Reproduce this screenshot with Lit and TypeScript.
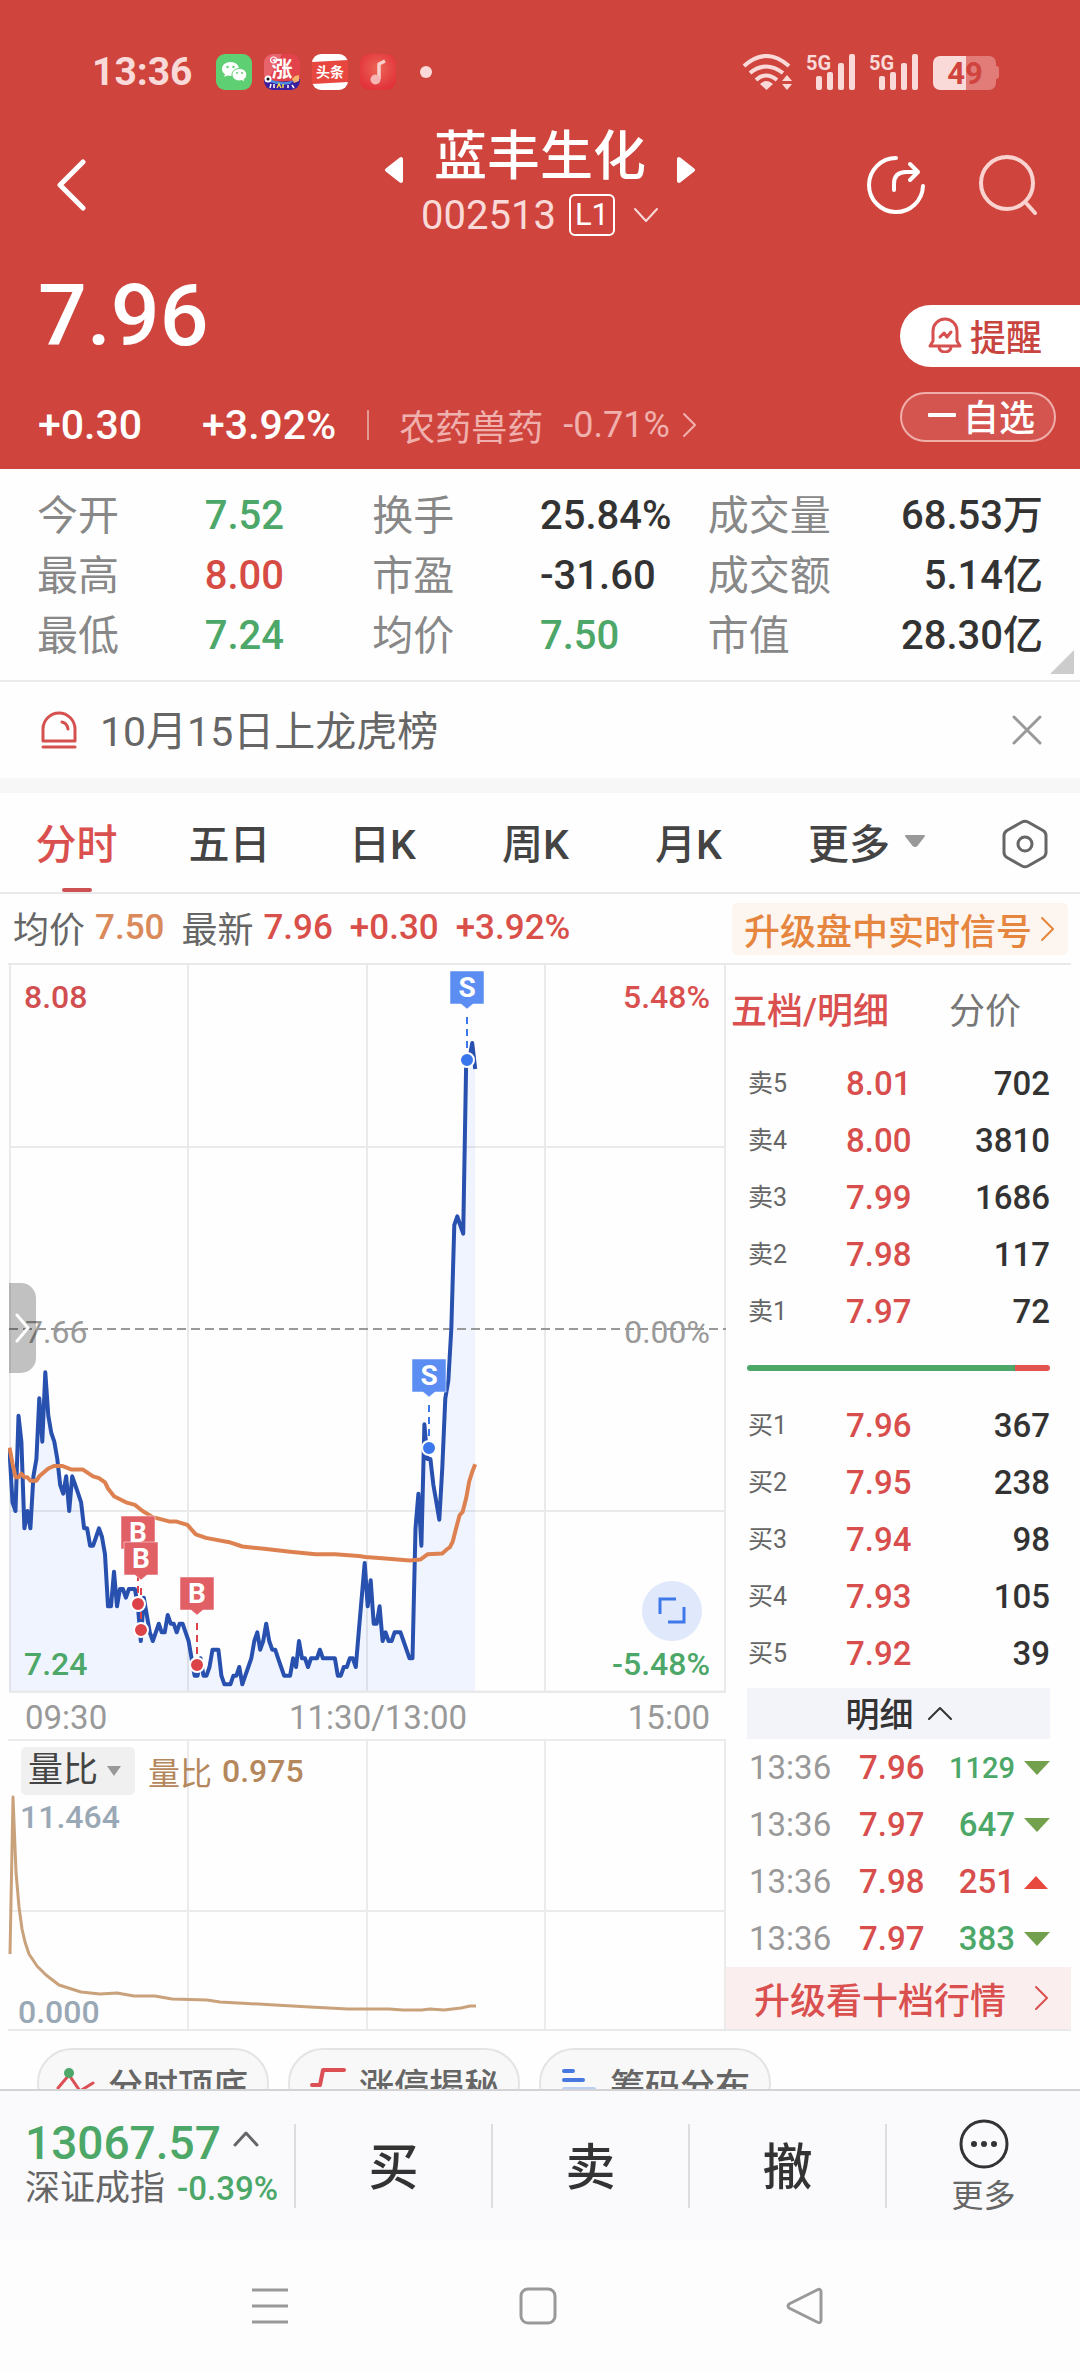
import { LitElement, html, svg, css } from "lit";
import { customElement } from "lit/decorators.js";

/* Minute prices in cents, 09:30 onwards. */
const PRICES = [
  752, 746, 745, 756, 753, 743, 745, 743, 749, 751, 758, 753, 761, 756, 754, 753, 751, 748, 747, 749,
  745, 749, 748, 747, 746, 743, 743, 741, 741, 742, 743, 742, 740, 734, 734, 738, 734, 736, 736, 735,
  736, 736, 736, 734, 730, 735, 733, 731, 730, 731, 732, 731, 731, 733, 732, 732, 731, 732, 732, 731,
  730, 728, 726, 726, 728, 726, 726, 727, 729, 729, 729, 726, 725, 725, 725, 726, 726, 727, 725, 726,
  727, 728, 730, 731, 729, 730, 732, 730, 729, 729, 728, 727, 726, 726, 726, 728, 727, 730, 728, 728,
  727, 728, 728, 728, 729, 728, 728, 728, 728, 728, 726, 726, 727, 727, 728, 728, 727, 731, 735, 739,
  734, 737, 732, 732, 734, 730, 731, 730, 730, 731, 731, 731, 730, 729, 728, 728, 743, 747, 741, 755,
  751, 751, 748, 746, 744, 750, 758, 760, 766, 778, 779, 778, 777, 797, 797, 799, 796,
];

/* Average price: [minute, cents]. */
const AVERAGE: [number, number][] = [
  [0, 752.3], [1, 750.5], [2, 748.9], [3, 748.9], [4, 749.3], [5, 748.9], [6, 748.9], [7, 748.5], [9, 748.5],
  [10, 749], [13, 749.9], [15, 750.2], [17.6, 750.2], [20.6, 749.8], [24.5, 749.8], [28, 749], [30, 748.8],
  [32, 748.3], [33, 747.6], [35, 746.7], [39, 746], [42, 745.7], [44.6, 745], [48, 744.3], [53.5, 743.8],
  [55.7, 743.8], [59.6, 743.4], [62.4, 742.3], [65.8, 741.9], [73.6, 741.4], [78, 740.9], [86, 740.6],
  [94, 740.3], [102.5, 740], [109, 740], [117, 739.8], [119.3, 739.7], [127, 739.5], [134, 739.3], [137.7, 739.4],
  [140, 740], [145, 740.1], [146.6, 740.6], [147.5, 740.8], [148.5, 741.5], [149.6, 743], [150.8, 744.5],
  [151.8, 744.9], [153, 746.5], [154, 748.4], [155, 749.5], [156, 750.4],
];

/* Volume ratio curve in the units of its own plot. */
const RATIO =
  "2,213 5,56 8,131 11,166 14,188 17,201 21,213 29,225 38,234 51,244 73,251 92,253 109,252 126,255 147,255 164,258 199,259 212,261 230,262 267,264 302,266 340,268 381,268 395,269 414,269 422,268 436,269 453,267 462,265 468,265";

const W = 718;
const H = 728;
const px = (minute: number) => 1.5 + minute * 2.985;
const py = (cents: number) => ((808 - cents) * H) / 84;
const at = (m: number, c: number) => `${px(m).toFixed(1)},${py(c).toFixed(1)}`;

interface Mark { kind: "B" | "S"; x: number; top: number; dot: number }
const MARKS: Mark[] = [
  { kind: "B", x: 130, top: 551, dot: 639 },
  { kind: "B", x: 133, top: 577, dot: 665 },
  { kind: "B", x: 189, top: 612, dot: 700 },
  { kind: "S", x: 421, top: 394, dot: 483 },
  { kind: "S", x: 459, top: 6, dot: 95 },
];

const STATS: [string, string, string][] = [
  ["今开", "7.52", "down"], ["换手", "25.84%", ""], ["成交量", "68.53万", ""],
  ["最高", "8.00", "up"], ["市盈", "-31.60", ""], ["成交额", "5.14亿", ""],
  ["最低", "7.24", "down"], ["均价", "7.50", "down"], ["市值", "28.30亿", ""],
];
const SELLS = [["卖5", "8.01", "702"], ["卖4", "8.00", "3810"], ["卖3", "7.99", "1686"], ["卖2", "7.98", "117"], ["卖1", "7.97", "72"]];
const BUYS = [["买1", "7.96", "367"], ["买2", "7.95", "238"], ["买3", "7.94", "98"], ["买4", "7.93", "105"], ["买5", "7.92", "39"]];
const TICKS: [string, string, string, "up" | "down"][] = [
  ["13:36", "7.96", "1129", "down"], ["13:36", "7.97", "647", "down"],
  ["13:36", "7.98", "251", "up"], ["13:36", "7.97", "383", "down"],
];

const base = css`
  :host { display: block; }
  * { box-sizing: border-box; }
  svg { display: block; flex: none; }
  button, select {
    font: inherit; color: inherit; background: none; border: 0; padding: 0; margin: 0;
    white-space: nowrap; cursor: pointer;
  }
  a { color: inherit; text-decoration: none; white-space: nowrap; }
  .up { color: #d84e4c; }
  .down { color: #4ca768; }
`;

const chevron = (w: number, h: number, d: string, sw = 3) =>
  html`<svg width=${w} height=${h} viewBox="0 0 ${w} ${h}" fill="none" stroke="currentColor" stroke-width=${sw} stroke-linecap="round" stroke-linejoin="round" aria-hidden="true"><path d=${d} /></svg>`;

@customElement("status-bar")
class StatusBar extends LitElement {
  static styles = [base, css`
    .bar { display: flex; align-items: center; padding: 54px 80px 0 92px; color: #f9dad8; }
    .time { font-size: 39px; font-weight: 700; line-height: 36px; }
    .apps { display: flex; align-items: center; gap: 12px; margin-left: 23px; flex: 1; }
    .more { width: 12px; height: 12px; border-radius: 50%; background: #f9dad8; margin-left: 12px; }
    .system { display: flex; align-items: center; gap: 14px; }
    .tiny { font-weight: 700; }
  `];

  private signal() {
    return html`<svg width="49" height="36" viewBox="0 0 49 36" fill="currentColor">
      <text class="tiny" x="-1" y="16" font-size="20">5G</text>
      <rect x="9" y="22" width="6" height="14" rx="2" /><rect x="20" y="18" width="6" height="18" rx="2" />
      <rect x="31" y="9" width="6" height="27" rx="2" /><rect x="42" y="0" width="6" height="36" rx="2" />
    </svg>`;
  }

  render() {
    return html`<div class="bar">
      <span class="time">13:36</span>
      <div class="apps">
        <svg width="36" height="36" viewBox="0 0 36 36">
          <rect width="36" height="36" rx="9" fill="#5fcf73" />
          <path d="M14.500 8C9.500 8 6 11.200 6 15c0 2.200 1.200 4 3 5.300L8.200 23l3.200-1.600c1 .3 2 .5 3.100.5C19.500 21.900 23 18.800 23 15s-3.500-7-8.500-7z" fill="#fff" />
          <path d="M23.500 14.500c-4.200 0-7.500 2.700-7.500 6.200 0 3.400 3.300 6.200 7.500 6.200.8 0 1.600-.1 2.300-.3l3 1.500-.7-2.600c1.600-1.200 2.600-2.900 2.600-4.800 0-3.500-3-6.200-7.200-6.200z" fill="#fff" stroke="#5fcf73" />
          <g fill="#5fcf73"><circle cx="11.500" cy="13" r="1.200" /><circle cx="17.500" cy="13" r="1.200" /><circle cx="21" cy="19" r="1" /><circle cx="26" cy="19" r="1" /></g>
        </svg>
        <svg width="36" height="36" viewBox="0 0 36 36">
          <clipPath id="r"><rect width="36" height="36" rx="9" /></clipPath>
          <g clip-path="url(#r)">
            <rect width="36" height="36" fill="#e2434b" />
            <path d="M0 0h18L6 22H0z" fill="#e8646c" />
            <path d="M0 25q18 5 36 0v11H0z" fill="#3b1f9c" />
            <path d="M5 25q14 6 25 1l-4 4q-10 2-20-2z" fill="#4c8fe0" />
            <path d="M28 25l3-3 4-1v6l-5 2z" fill="#f6b26b" />
            <circle cx="4" cy="25" r="3.500" fill="#fff" /><circle cx="4" cy="25" r="1.500" fill="#111" />
            <circle cx="9.500" cy="6" r="3" fill="none" stroke="#fff" stroke-width="1.200" />
            <text class="tiny" x="18" y="22" font-size="21" fill="#fff" text-anchor="middle">涨</text>
            <path d="M6 34l1-4M10 34v-4M24 31v3M28 31l2 3" stroke="#fff" stroke-width="1.500" /><path d="M13 34l2-4 2 4M19 30v4" stroke="#f5d84a" stroke-width="1.500" fill="none" />
          </g>
        </svg>
        <svg width="36" height="36" viewBox="0 0 36 36">
          <rect width="36" height="36" rx="9" fill="#fff" />
          <path d="M0 8l36-2v22L0 30z" fill="#e8473f" />
          <text class="tiny" x="18" y="23" font-size="14" fill="#fff" text-anchor="middle">头条</text>
        </svg>
        <svg width="36" height="36" viewBox="0 0 36 36">
          <defs><radialGradient id="m" cx=".5" cy=".4" r=".6"><stop offset="0" stop-color="#ec6555" /><stop offset="1" stop-color="#e2333b" /></radialGradient></defs>
          <rect width="36" height="36" rx="9" fill="url(#m)" />
          <path d="M19 25V10l6-3" fill="none" stroke="#f8cfca" stroke-width="3.500" stroke-linejoin="round" />
          <circle cx="15.500" cy="25.500" r="5" fill="#f5b5b3" />
        </svg>
        <span class="more"></span>
      </div>
      <div class="system">
        <svg width="51" height="36" viewBox="0 0 51 36" fill="none" stroke="currentColor" stroke-width="4">
          <path d="M2 12Q24-8 47 12M8 19Q24 6 41 19M14 26Q24 17 35 26" />
          <path d="M18 30q6.500-6 13 0l-6.500 6z" fill="currentColor" stroke="none" />
          <path d="M40 27h10l-5-6zM40 30h10l-5 6z" fill="currentColor" stroke="none" />
        </svg>
        ${this.signal()}${this.signal()}
        <svg width="67" height="36" viewBox="0 0 67 36">
          <path d="M33 2h23a7 7 0 0 1 7 7v3q3 0 3 3v7q0 3-3 3v4a7 7 0 0 1-7 7H33z" fill="#e17c78" />
          <path d="M33 2H7a7 7 0 0 0-7 7v20a7 7 0 0 0 7 7h26z" fill="#f9dad8" />
          <text class="tiny" x="32" y="30" font-size="31" fill="#cf453e" text-anchor="middle">49</text>
        </svg>
      </div>
    </div>`;
  }
}

@customElement("stock-header")
class StockHeader extends LitElement {
  static styles = [base, css`
    .head { display: grid; grid-template-columns: 1fr auto 1fr; align-items: center; padding: 37px 42px 0; color: #fff; }
    .back { justify-self: start; padding-left: 14px; }
    .center { display: flex; flex-direction: column; align-items: center; }
    .names { display: flex; align-items: center; gap: 30px; }
    .name { margin: 0; font-size: 53px; font-weight: 500; line-height: 60px; }
    .step { margin-top: 26px; display: flex; }
    .code { display: flex; align-items: center; height: 56px; font-size: 40px; color: #f9dad8; }
    .level { border: 2px solid #fff; border-radius: 6px; color: #fff; font-size: 31px; line-height: 38px; width: 46px; text-align: center; margin: 0 18px 0 13px; }
    .actions { display: flex; justify-content: flex-end; gap: 52px; }
    .quote { display: flex; justify-content: space-between; padding: 33px 0 20px 38px; color: #fff; }
    .price { font-size: 86px; font-weight: 500; line-height: 80px; }
    .change { display: flex; align-items: center; margin-top: 45px; height: 48px; font-size: 41px; font-weight: 500; }
    .percent { margin-left: 60px; }
    .rule { width: 2px; height: 30px; background: #e29a95; margin: 0 30px 0 31px; }
    .sector { display: flex; align-items: center; font-size: 36px; font-weight: 400; color: #f0b0ad; }
    .sector-change { margin: 0 12px 0 20px; }
    .side { display: flex; flex-direction: column; gap: 25px; padding-top: 29px; }
    .remind { display: flex; align-items: center; gap: 8px; width: 180px; height: 62px; padding: 0 0 2px 28px; border-radius: 31px 0 0 31px; background: #fff; color: #c8443f; font-size: 36px; font-weight: 500; }
    .fav { display: flex; align-items: center; gap: 7px; width: 156px; height: 50px; padding: 0 0 4px 26px; border: 2px solid #f0aeab; border-radius: 25px; background: #d4554f; font-size: 36px; font-weight: 500; }
  `];

  render() {
    return html`
      <header class="head">
        <button class="back" aria-label="返回">${chevron(30, 52, "M27 3L4 26L27 49", 5)}</button>
        <div class="center">
          <div class="names">
            <button class="step" aria-label="上一只"><svg width="20" height="28" viewBox="0 0 20 28"><path d="M17 3v22L3 14z" fill="#fff" stroke="#fff" stroke-width="4" stroke-linejoin="round" /></svg></button>
            <h1 class="name">蓝丰生化</h1>
            <button class="step" aria-label="下一只"><svg width="20" height="28" viewBox="0 0 20 28"><path d="M3 3v22l14-11z" fill="#fff" stroke="#fff" stroke-width="4" stroke-linejoin="round" /></svg></button>
          </div>
          <div class="code"><span>002513</span><span class="level">L1</span>${chevron(26, 16, "M2 2L13 14L24 2", 2)}</div>
        </div>
        <div class="actions">
          <button aria-label="分享"><svg width="60" height="60" viewBox="0 0 60 60" fill="none" stroke="#fff" stroke-width="4" stroke-linecap="round" stroke-linejoin="round"><path d="M30 3A27 27 0 1 0 57 31" /><path d="M28 35v-6q0-12 12-12h12M44 9l8 8-8 8" /></svg></button>
          <button aria-label="搜索"><svg width="60" height="60" viewBox="0 0 60 60" fill="none" stroke="#fad3d1" stroke-width="4" stroke-linecap="round"><circle cx="29" cy="28" r="26" /><path d="M49 49l8 9" /></svg></button>
        </div>
      </header>
      <section class="quote">
        <div class="main">
          <div class="price">7.96</div>
          <div class="change">
            <span>+0.30</span><span class="percent">+3.92%</span><span class="rule"></span>
            <a class="sector" href="#sector"><span>农药兽药</span><span class="sector-change">-0.71%</span>${chevron(15, 26, "M2 2L13 13L2 24", 2)}</a>
          </div>
        </div>
        <div class="side">
          <button class="remind">
            <svg width="34" height="36" viewBox="0 0 34 36" fill="none" stroke="#d6504f" stroke-width="3" stroke-linejoin="round" stroke-linecap="round"><path d="M2 29L5 24V14a12 12 0 0 1 24 0v10l3 5z" /><path d="M11 30a6 5 0 0 0 12 0" /><path d="M12 20l4-4 3 4 4-5" /></svg>
            提醒
          </button>
          <button class="fav"><svg width="28" height="4" viewBox="0 0 28 4"><rect width="28" height="4" rx="1" fill="#fff" /></svg>自选</button>
        </div>
      </section>`;
  }
}

@customElement("stock-stats")
class StockStats extends LitElement {
  static styles = [base, css`
    .stats { position: relative; display: grid; grid-template-columns: repeat(3, minmax(0, 1fr)); margin: 0; padding: 17px 37px 14px; border-bottom: 2px solid #ececec; line-height: 60px; }
    .pair { display: grid; grid-template-columns: 1fr 1fr; white-space: nowrap; }
    .label { font-size: 41px; color: #888; }
    .value { margin: 0; font-size: 40px; font-weight: 500; color: #333; }
    .value.up { color: #d64b44; }
    .value.down { color: #4ca768; }
    .pair:nth-child(3n) .value { text-align: right; }
    .corner { position: absolute; right: 6px; bottom: 6px; }
    .notice { display: flex; align-items: center; height: 96px; padding: 0 38px 0 40px; color: #666; font-size: 41px; }
    .text { flex: 1; margin-left: 22px; padding-bottom: 4px; }
    .band { height: 15px; background: #f7f7f7; }
    .close { color: #999; }
  `];

  render() {
    return html`
      <dl class="stats">
        ${STATS.map(([k, v, c]) => html`<div class="pair"><dt class="label">${k}</dt><dd class="value ${c}">${v}</dd></div>`)}
        <svg class="corner" width="24" height="24" viewBox="0 0 24 24"><path d="M24 0v24H0z" fill="#ccc" /></svg>
      </dl>
      <div class="notice">
        <svg width="38" height="38" viewBox="0 0 38 38" fill="none" stroke="#d4514f" stroke-width="3" stroke-linecap="round" stroke-linejoin="round"><path d="M3 30V18a16 16 0 0 1 32 0v12zM3 36h32M22 11q5 1 6 7" /></svg>
        <span class="text">10月15日上龙虎榜</span>
        <button class="close" aria-label="关闭">${chevron(30, 30, "M2 2L28 28M28 2L2 28", 3)}</button>
      </div>
      <div class="band"></div>`;
  }
}

@customElement("chart-tabs")
class ChartTabs extends LitElement {
  static styles = [base, css`
    .tabs { display: grid; grid-template-columns: repeat(5, 153fr) 204fr 111fr; height: 101px; border-bottom: 2px solid #e9e9e9; font-size: 41px; font-weight: 500; color: #444; }
    .tab { position: relative; display: flex; align-items: center; justify-content: center; gap: 14px; padding-bottom: 4px; }
    .active { color: #d9504f; }
    .active::after { content: ""; position: absolute; bottom: 0; width: 30px; height: 4px; border-radius: 2px; background: #cd5152; }
    .gear { padding: 2px 0 0; }
    .info { display: flex; align-items: center; height: 69px; padding: 0 12px 0 13px; font-size: 36px; white-space: nowrap; }
    .key { color: #666; margin-right: 10px; padding-bottom: 4px; }
    .num { font-size: 35px; font-weight: 500; margin-right: 17px; padding-bottom: 2px; }
    .avg { color: #d9895a; }
    .info .up { color: #d94f49; }
    .promo { display: flex; align-items: center; gap: 9px; height: 52px; margin-left: auto; padding: 0 13px 0 12px; border-radius: 5px; background: #fdf5ef; color: #e5853e; font-weight: 500; }
  `];

  render() {
    return html`
      <nav class="tabs">
        <button class="tab active">分时</button>
        ${["五日", "日K", "周K", "月K"].map((t) => html`<button class="tab">${t}</button>`)}
        <button class="tab">更多<svg width="22" height="14" viewBox="0 0 22 14"><path d="M2 2h18l-7 9q-2 2-4 0z" fill="#999" stroke="#999" stroke-width="2" stroke-linejoin="round" /></svg></button>
        <button class="tab gear" aria-label="设置"><svg width="46" height="50" viewBox="0 0 46 50" fill="none" stroke="#666" stroke-width="3"><path d="M20 3q3-1.500 6 0l15 8.500q3 2 3 5v17q0 3-3 5L26 47q-3 1.500-6 0L5 38.500q-3-2-3-5v-17q0-3 3-5z" /><circle cx="23" cy="25" r="7" /></svg></button>
      </nav>
      <div class="info">
        <span class="key">均价</span><span class="num avg">7.50</span>
        <span class="key">最新</span><span class="num up">7.96</span><span class="num up">+0.30</span><span class="num up">+3.92%</span>
        <a class="promo" href="#signal"><span>升级盘中实时信号</span>${chevron(14, 26, "M1 2L12 13L1 24", 2)}</a>
      </div>`;
  }
}

@customElement("price-chart")
class PriceChart extends LitElement {
  static styles = [base, css`
    .plot { position: relative; }
    .canvas { width: 100%; height: auto; }
    .axis { display: flex; justify-content: space-between; align-items: center; height: 48px; padding: 2px 16px 0 17px; font-size: 33px; color: #999; border-bottom: 2px solid #ececec; }
    .noon { padding-left: 21px; }
    .lbl { font-size: 32px; font-weight: 500; }
    .plain { font-size: 32px; }
    .flag { font-size: 28px; font-weight: 700; }
    .handle { position: absolute; left: 1px; top: 50%; height: 90px; margin-top: -46px; width: 27px; padding-left: 6px; border-radius: 0 15px 15px 0; background: rgba(0, 0, 0, 0.24); color: #fff; }
    .expand { position: absolute; right: 24px; bottom: 52px; width: 60px; height: 60px; border-radius: 50%; background: #e0e8fc; display: grid; place-items: center; }
    .legend { position: absolute; left: 13px; top: 6px; display: flex; align-items: center; gap: 13px; color: #b5875c; font-size: 32px; }
    .pick { position: relative; display: flex; align-items: center; }
    .select { appearance: none; width: 114px; height: 48px; padding-left: 7px; border-radius: 5px; background: #f0f0f0; color: #444; font-size: 35px; line-height: 46px; }
    .caret { position: absolute; right: 13px; pointer-events: none; }
    .ratio { display: flex; align-items: center; gap: 10px; }
    .ratio-num { font-weight: 500; }
  `];

  private mark(m: Mark) {
    const red = m.kind === "B";
    const fill = red ? "#e06066" : "#5b8df2";
    const dot = red ? "#dc4349" : "#3a76ec";
    return svg`
      <path d="M${m.x} ${m.top + 46}V${m.dot}" stroke=${dot} stroke-width="2" stroke-dasharray="7 5" />
      <circle cx=${m.x} cy=${m.dot} r="7" fill=${dot} stroke="#fff" stroke-width="2" />
      <path d="M${m.x - 17} ${m.top}h34v33h-11l-6 5-6-5h-11z" fill=${fill} stroke="#fff" stroke-opacity=".5" />
      <text class="flag" x=${m.x} y=${m.top + 26} text-anchor="middle" fill="#fff">${m.kind}</text>`;
  }

  render() {
    const line = PRICES.map((c, i) => at(i, c)).join(" ");
    const last = px(PRICES.length - 1);
    const avg = AVERAGE.map(([m, c]) => at(m, c)).join(" ");
    return html`
      <div class="plot">
        <svg class="canvas" viewBox="0 0 ${W} ${H}" role="img" aria-label="分时走势">
          <rect x="1" width="716" height=${H} fill="#fefefe" />
          <polygon points="${px(0)},${H} ${line} ${last},${H}" fill="#eff4fe" />
          <path d="M2 0V728M180 0V728M359 0V728M537 0V728M717 0V728M1 182H718M1 546H718" stroke="#000" stroke-opacity=".08" stroke-width="2" fill="none" />
          <path d="M1 727H718" stroke="#e9e9ea" stroke-width="3" />
          <path d="M1 364H718" stroke="#999" stroke-width="2" stroke-dasharray="9 5" />
          <text class="lbl" x="16" y="43" fill="#d14f50">8.08</text>
          <text class="lbl" x="702" y="43" fill="#d9504f" text-anchor="end">5.48%</text>
          <text class="plain" x="17" y="378" fill="#999">7.66</text>
          <text class="plain" x="702" y="378" fill="#999" text-anchor="end">0.00%</text>
          <text class="lbl" x="16" y="710" fill="#4ca768">7.24</text>
          <text class="lbl" x="702" y="710" fill="#4ca768" text-anchor="end">-5.48%</text>
          <polyline points=${line} fill="none" stroke="#2850ae" stroke-width="4" stroke-linejoin="round" />
          <polyline points=${avg} fill="none" stroke="#dd8150" stroke-width="4" stroke-linejoin="round" />
          ${MARKS.map((m) => this.mark(m))}
        </svg>
        <button class="handle" aria-label="展开侧栏">${chevron(16, 30, "M2 2L13 15L2 28", 3)}</button>
        <button class="expand" aria-label="全屏"><svg width="30" height="28" viewBox="0 0 30 28" fill="none" stroke="#3f78e8" stroke-width="3"><path d="M3 17V2h16M27 10v15H11" /></svg></button>
      </div>
      <div class="axis"><span>09:30</span><span class="noon">11:30/13:00</span><span>15:00</span></div>
      <div class="plot">
        <svg class="canvas" viewBox="0 0 718 288" role="img" aria-label="量比走势">
          <path d="M180 0V288M359 0V288M537 0V288M717 0V288M1 170H718" stroke="#ebebeb" stroke-width="2" fill="none" />
          <text class="lbl" x="12" y="87" fill="#9aa8b6">11.464</text>
          <text class="lbl" x="10" y="282" fill="#9aa8b6">0.000</text>
          <polyline points=${RATIO} fill="none" stroke="#c9a27c" stroke-width="3" stroke-linejoin="round" />
        </svg>
        <div class="legend">
          <label class="pick"><select class="select" aria-label="指标"><option>量比</option></select>
            <svg class="caret" width="16" height="12" viewBox="0 0 16 12"><path d="M1 1h14L8 11z" fill="#999" /></svg></label>
          <span class="ratio">量比 <span class="ratio-num">0.975</span></span>
        </div>
      </div>`;
  }
}

@customElement("order-book")
class OrderBook extends LitElement {
  static styles = [base, css`
    .tabs { display: flex; align-items: center; height: 90px; padding: 0 0 4px 5px; gap: 60px; font-size: 36px; }
    .tab { color: #777; }
    .tab.active { color: #d9504f; font-weight: 500; }
    .book, .ticks { width: 100%; border-collapse: collapse; table-layout: fixed; font-size: 33px; font-weight: 500; }
    td, th { height: 57px; padding: 0; line-height: 40px; text-align: left; font-weight: 500; }
    .wrap { padding: 0 21px; }
    .side { width: 99px; padding-left: 1px; font-size: 25px; font-weight: 400; color: #666; }
    .vol { text-align: right; color: #333; }
    .balance { display: flex; height: 6px; margin: 25px 0 26px; border-radius: 3px; overflow: hidden; }
    .sell { flex: 268; background: #4ca768; }
    .buy { flex: 35; background: #e2544f; }
    .detail { display: flex; align-items: center; justify-content: center; gap: 14px; width: 100%; height: 51px; margin-top: 6px; padding-bottom: 2px; background: #f3f4f9; color: #333; font-size: 34px; font-weight: 500; }
    .time { width: 112px; padding-left: 2px; color: #999; font-weight: 400; }
    .cost { width: 70px; }
    .amount { text-align: right; }
    .long { font-size: 29px; }
    .sign { width: 35px; }
    .sign svg { margin-left: auto; }
    .promo { display: flex; align-items: center; justify-content: space-between; height: 62px; padding: 0 22px 0 28px; background: #fbeeef; color: #d9504f; font-size: 36px; font-weight: 500; }
  `];

  private rows(list: string[][]) {
    return html`<table class="book"><tbody>
      ${list.map(([s, p, v]) => html`<tr><th class="side" scope="row">${s}</th><td class="up">${p}</td><td class="vol">${v}</td></tr>`)}
    </tbody></table>`;
  }

  render() {
    return html`
      <div class="tabs"><button class="tab active">五档/明细</button><button class="tab">分价</button></div>
      <div class="wrap">
        ${this.rows(SELLS)}
        <div class="balance"><span class="sell"></span><span class="buy"></span></div>
        ${this.rows(BUYS)}
        <button class="detail">明细${chevron(24, 14, "M1 13L12 2L23 13", 2)}</button>
        <table class="ticks"><tbody>
          ${TICKS.map(([t, p, v, d]) => html`<tr>
            <td class="time">${t}</td><td class="cost up">${p}</td>
            <td class="amount ${d} ${v.length > 3 ? "long" : ""}">${v}</td>
            <td class="sign"><svg width="26" height="14" viewBox="0 0 26 14">${d === "up"
              ? svg`<path d="M0 14h24L12 1z" fill="#e8493f" />`
              : svg`<path d="M0 0h26L13 14z" fill="#72a04c" />`}</svg></td>
          </tr>`)}
        </tbody></table>
      </div>
      <a class="promo" href="#depth">升级看十档行情${chevron(14, 26, "M1 2L12 13L1 24", 2)}</a>`;
  }
}

@customElement("bottom-bar")
class BottomBar extends LitElement {
  static styles = [base, css`
    .bar { display: grid; grid-template-columns: 294fr 197fr 197fr 197fr 195fr; align-items: center; height: 151px; border-top: 2px solid #d3d3d6; background: #fafafc; }
    .index { padding-left: 25px; text-align: left; line-height: 45px; color: #666; }
    .row { display: flex; align-items: center; white-space: nowrap; }
    .points { font-size: 46px; font-weight: 500; margin-right: 12px; color: #4ca768; }
    .row svg { margin-bottom: 8px; }
    .name { font-size: 35px; margin-right: 12px; }
    .pct { font-size: 33px; font-weight: 500; }
    .trade { height: 84px; padding-bottom: 6px; border-left: 2px solid #ddd; font-size: 50px; font-weight: 500; color: #333; }
    .more { height: 84px; border-left: 2px solid #ddd; display: flex; flex-direction: column; align-items: center; justify-content: center; gap: 7px; padding-top: 4px; font-size: 32px; line-height: 40px; color: #666; }
    .system { display: grid; grid-template-columns: 270fr 536fr 274fr; align-items: center; height: 132px; background: #fdfdfe; }
    .left { justify-self: end; margin-right: -18px; }
    .mid { justify-self: center; }
    .right { justify-self: start; margin-left: -20px; }
  `];

  render() {
    return html`
      <div class="bar">
        <button class="index">
          <span class="row"><span class="points">13067.57</span>${chevron(26, 16, "M2 14L13 2L24 14", 3)}</span>
          <span class="row"><span class="name">深证成指</span><span class="pct down">-0.39%</span></span>
        </button>
        <button class="trade">买</button><button class="trade">卖</button><button class="trade">撤</button>
        <button class="more"><svg width="50" height="50" viewBox="0 0 50 50"><circle cx="25" cy="25" r="23" fill="none" stroke="#333" stroke-width="3" /><g fill="#333"><circle cx="15" cy="25" r="3" /><circle cx="25" cy="25" r="3" /><circle cx="35" cy="25" r="3" /></g></svg>更多</button>
      </div>
      <nav class="system">
        <button class="left" aria-label="最近任务"><svg width="36" height="38" viewBox="0 0 36 38" stroke="#999" stroke-width="3"><path d="M0 3H36M0 19H36M0 35H36" /></svg></button>
        <button class="mid" aria-label="主屏幕"><svg width="38" height="38" viewBox="0 0 38 38" fill="none" stroke="#999" stroke-width="3"><rect x="2" y="2" width="34" height="34" rx="7" /></svg></button>
        <button class="right" aria-label="返回"><svg width="38" height="38" viewBox="0 0 38 38" fill="none" stroke="#999" stroke-width="3" stroke-linejoin="round"><path d="M31 3q4-2 4 2v28q0 4-4 2L3 21q-2-2 0-4z" /></svg></button>
      </nav>`;
  }
}

@customElement("app-root")
class AppRoot extends LitElement {
  static styles = [base, css`
    :host { background: #fefefe; font-family: Roboto, "Noto Sans CJK SC", sans-serif; color: #333; }
    .hero { background: #cf453e; }
    .board { display: grid; grid-template-columns: minmax(0, 718fr) minmax(0, 345fr); margin: 0 9px 0 8px; border-top: 2px solid #e9e9e9; border-bottom: 2px solid #e9e9e9; }
    .chips { display: flex; gap: 19px; height: 58px; padding: 17px 37px 0; overflow: hidden; }
    .chip { display: flex; align-items: center; gap: 12px; flex: none; width: 232px; height: 70px; padding-left: 17px; border: 2px solid #e4e4e4; border-radius: 35px; background: #f8f8f8; color: #666; font-size: 35px; font-weight: 500; }
  `];

  render() {
    return html`
      <div class="hero"><status-bar></status-bar><stock-header></stock-header></div>
      <stock-stats></stock-stats>
      <chart-tabs></chart-tabs>
      <main class="board"><price-chart></price-chart><order-book></order-book></main>
      <div class="chips">
        <button class="chip"><svg width="40" height="40" viewBox="0 0 40 40" fill="none" stroke="#dc5055" stroke-width="3" stroke-linecap="round"><path d="M2 25L13 12L24 28L37 20" /><circle cx="13" cy="10" r="5" fill="#4ca768" stroke="none" /></svg>分时顶底</button>
        <button class="chip"><svg width="40" height="40" viewBox="0 0 40 40" fill="none" stroke="#dc5055" stroke-width="4" stroke-linecap="round" stroke-linejoin="round"><path d="M5 22h8L16 7h21" /></svg>涨停揭秘</button>
        <button class="chip"><svg width="40" height="40" viewBox="0 0 40 40" fill="none" stroke="#4678e0" stroke-width="4" stroke-linecap="round"><path d="M6 8h9M6 17h19" /><path d="M6 26h30" stroke="#bcd0f6" /></svg>筹码分布</button>
      </div>
      <bottom-bar></bottom-bar>`;
  }
}
